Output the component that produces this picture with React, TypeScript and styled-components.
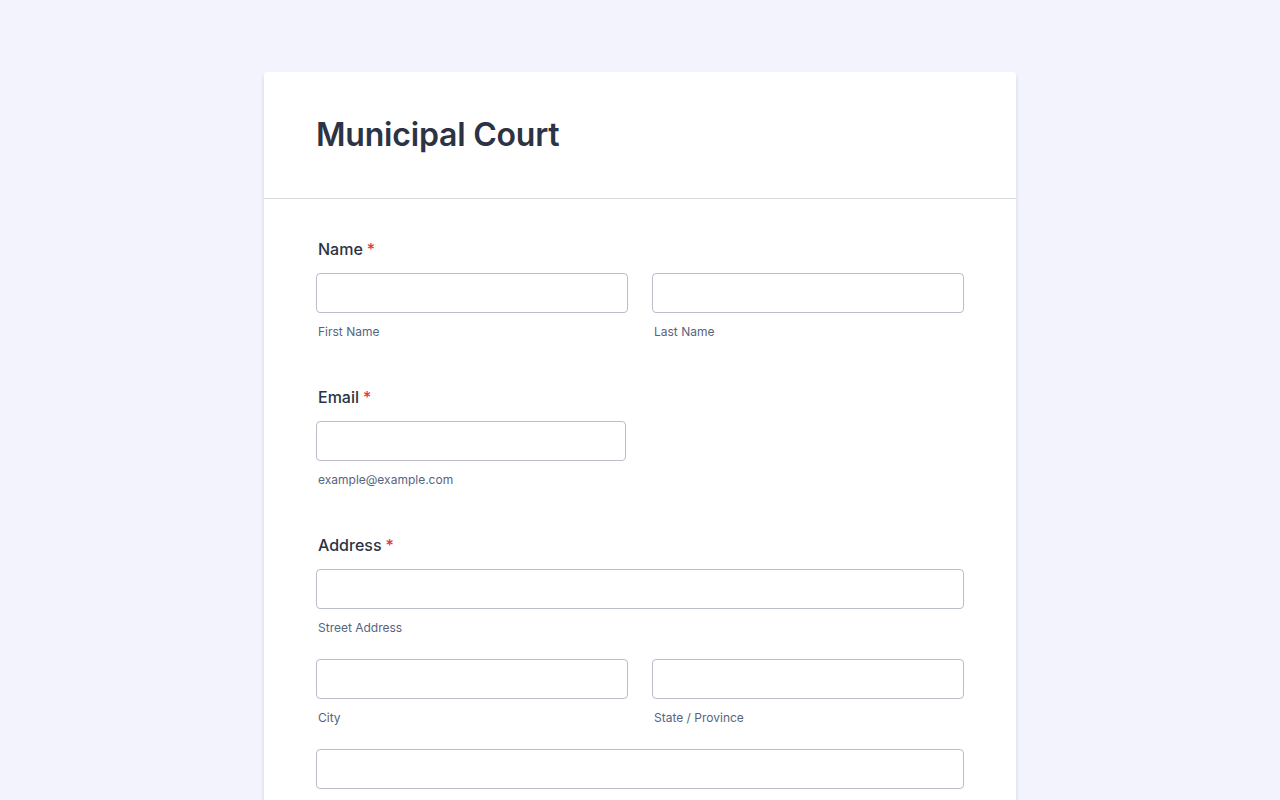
import React from "react";
import styled, { createGlobalStyle } from "styled-components";

const Global = createGlobalStyle`
  html, body { margin: 0; padding: 0; background: #f3f3fe; }
  body { font-family: Inter, "Noto Sans", sans-serif; color: #2c3345; }
  * { box-sizing: border-box; }
`;

const Page = styled.div`
  display: flex;
  justify-content: center;
  padding-top: 72px;
  min-height: 800px;
`;

const Card = styled.div`
  width: 752px;
  background: #fff;
  border-radius: 3px 3px 0 0;
  box-shadow: 0 4px 4px rgba(87, 100, 126, 0.21);
`;

const Header = styled.div`
  height: 127px;
  padding: 0 52px;
  display: flex;
  align-items: center;
  border-bottom: 1px solid #d8dae0;
`;

const Title = styled.h1`
  margin: 0;
  font-size: 32px;
  font-weight: 600;
  line-height: 40px;
  color: #2c3345;
  letter-spacing: -0.2px;
`;

const Body = styled.div`
  padding: 40px 52px 0;
  display: flex;
  flex-direction: column;
`;

const Field = styled.div`
  display: flex;
  flex-direction: column;
  margin-bottom: 48px;
`;

const Label = styled.label`
  font-size: 16px;
  font-weight: 500;
  line-height: 20px;
  padding-left: 2px;
  margin-bottom: 14px;
  color: #2c3345;
`;

const Req = styled.span`
  color: #e5343a;
  margin-left: 4px;
`;

const Row = styled.div`
  display: grid;
  grid-template-columns: ${(p: { $cols: string }) => p.$cols};
  column-gap: 24px;
  & + & { margin-top: 24px; }
`;

const Cell = styled.div`
  display: flex;
  flex-direction: column;
`;

const Input = styled.input`
  height: 40px;
  width: 100%;
  border: 1px solid #b8bdc9;
  border-radius: 4px;
  background: #fff;
  outline: none;
  font-family: inherit;
  font-size: 15px;
  padding: 0 10px;
`;

const Sub = styled.span`
  margin-top: 12px;
  padding-left: 2px;
  font-size: 12px;
  line-height: 14px;
  color: #57647e;
`;

export default function App() {
  return (
    <>
      <Global />
      <Page>
        <Card>
          <Header>
            <Title>Municipal Court</Title>
          </Header>
          <Body>
            <Field>
              <Label>
                Name<Req>*</Req>
              </Label>
              <Row $cols="1fr 1fr">
                <Cell>
                  <Input />
                  <Sub>First Name</Sub>
                </Cell>
                <Cell>
                  <Input />
                  <Sub>Last Name</Sub>
                </Cell>
              </Row>
            </Field>
            <Field>
              <Label>
                Email<Req>*</Req>
              </Label>
              <Row $cols="310px">
                <Cell>
                  <Input />
                  <Sub>example@example.com</Sub>
                </Cell>
              </Row>
            </Field>
            <Field>
              <Label>
                Address<Req>*</Req>
              </Label>
              <Row $cols="1fr">
                <Cell>
                  <Input />
                  <Sub>Street Address</Sub>
                </Cell>
              </Row>
              <Row $cols="1fr 1fr">
                <Cell>
                  <Input />
                  <Sub>City</Sub>
                </Cell>
                <Cell>
                  <Input />
                  <Sub>State / Province</Sub>
                </Cell>
              </Row>
              <Row $cols="1fr">
                <Cell>
                  <Input />
                  <Sub>Postal / Zip Code</Sub>
                </Cell>
              </Row>
            </Field>
          </Body>
        </Card>
      </Page>
    </>
  );
}
